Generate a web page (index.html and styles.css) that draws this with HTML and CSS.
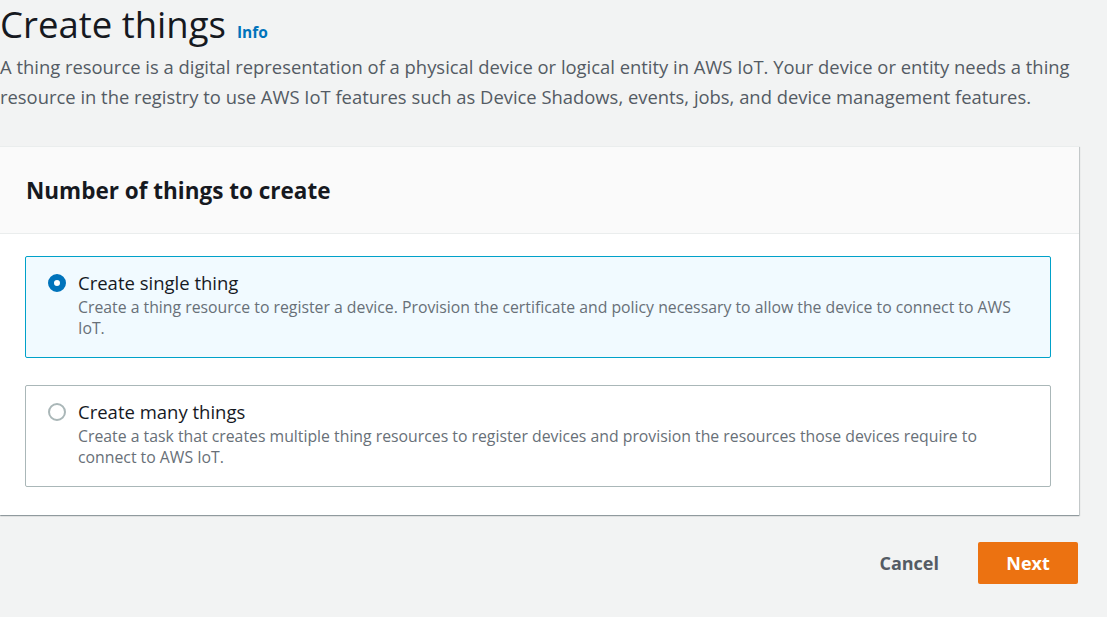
FILE: index.html
```html
<!DOCTYPE html>
<html>
<head>
<meta charset="utf-8">
<link rel="stylesheet" href="styles.css">
</head>
<body>
<div class="page">
  <header class="page-header">
    <h1 class="title">Create things <a class="info" href="#">Info</a></h1>
    <p class="lead">A thing resource is a digital representation of a physical device or logical entity in AWS IoT. Your device or entity needs a thing resource in the registry to use AWS IoT features such as Device Shadows, events, jobs, and device management features.</p>
  </header>
  <section class="card">
    <div class="card-header">
      <h2 class="card-title">Number of things to create</h2>
    </div>
    <div class="card-body">
      <label class="option selected">
        <span class="radio checked"></span>
        <span class="option-text">
          <span class="option-title">Create single thing</span>
          <span class="option-desc">Create a thing resource to register a device. Provision the certificate and policy necessary to allow the device to connect to AWS IoT.</span>
        </span>
      </label>
      <label class="option">
        <span class="radio"></span>
        <span class="option-text">
          <span class="option-title">Create many things</span>
          <span class="option-desc">Create a task that creates multiple thing resources to register devices and provision the resources those devices require to connect to AWS IoT.</span>
        </span>
      </label>
    </div>
  </section>
  <div class="actions">
    <button class="btn-cancel">Cancel</button>
    <button class="btn-next">Next</button>
  </div>
</div>
</body>
</html>
```
FILE: styles.css
```css
html, body {
  margin: 0;
  padding: 0;
  background: #f2f3f3;
  font-family: "Open Sans", "Noto Sans", sans-serif;
  color: #16191f;
}
.page {
  width: 1079px;
}
.title {
  margin: 0;
  font-size: 36.5px;
  font-weight: 400;
  line-height: 48px;
  color: #16191f;
  display: flex;
  align-items: baseline;
  gap: 11px;
}
.info {
  font-size: 15.5px;
  font-weight: 700;
  color: #0073bb;
  text-decoration: none;
}
.lead {
  margin: -4px 0 0 0;
  font-size: 18.4px;
  line-height: 30px;
  color: #545b64;
}
.card {
  margin-top: 34px;
  background: #ffffff;
  box-shadow: 0 1px 1px 0 rgba(0, 28, 36, 0.3), 1px 1px 1px 0 rgba(0, 28, 36, 0.15);
}
.card-header {
  background: #fafafa;
  border-top: 1px solid #eaeded;
  border-bottom: 1px solid #eaeded;
  height: 86px;
  display: flex;
  align-items: center;
  padding: 0 26px;
}
.card-title {
  margin: 0;
  font-size: 22.5px;
  font-weight: 700;
  color: #16191f;
}
.card-body {
  padding: 22px 28px 28px 25px;
  display: flex;
  flex-direction: column;
  gap: 27px;
}
.option {
  display: flex;
  align-items: flex-start;
  gap: 12px;
  border: 1px solid #aab7b8;
  border-radius: 2px;
  padding: 15px 20px 18px 22px;
}
.option.selected {
  border-color: #00a1c9;
  background: #f1faff;
}
.radio {
  flex: none;
  box-sizing: border-box;
  width: 18px;
  height: 18px;
  border: 2px solid #aab7b8;
  border-radius: 50%;
  margin-top: 2px;
  background: #fff;
}
.radio.checked {
  border: 6px solid #0073bb;
}
.option-text {
  display: flex;
  flex-direction: column;
}
.option-title {
  font-size: 18.5px;
  line-height: 22px;
  color: #16191f;
}
.option-desc {
  font-size: 15.8px;
  line-height: 21px;
  color: #687078;
  margin-top: 3px;
}
.actions {
  display: flex;
  justify-content: flex-end;
  align-items: center;
  gap: 39px;
  margin-top: 27px;
  padding-right: 1px;
}
.btn-cancel {
  border: none;
  background: none;
  font-family: inherit;
  font-size: 18px;
  font-weight: 700;
  color: #545b64;
  padding: 0;
}
.btn-next {
  border: none;
  background: #ec7211;
  color: #ffffff;
  font-family: inherit;
  font-size: 18px;
  font-weight: 700;
  width: 100px;
  height: 42px;
  border-radius: 2px;
  padding: 0;
}
```
